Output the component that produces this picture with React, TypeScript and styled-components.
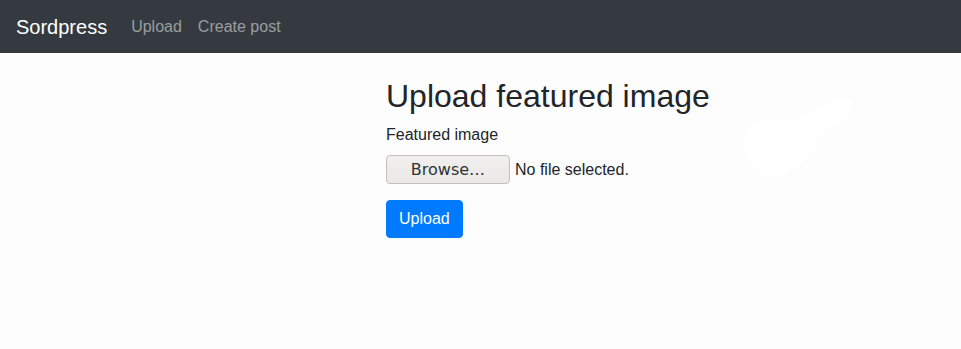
import React from "react";
import styled, { createGlobalStyle } from "styled-components";

const GlobalStyle = createGlobalStyle`
  * { box-sizing: border-box; }
  html, body {
    margin: 0;
    padding: 0;
    background: #fdfdfd;
    color: #212529;
    font-family: "Liberation Sans", Arial, sans-serif;
    font-size: 16px;
    line-height: 1.5;
  }
`;

const Page = styled.div`
  position: relative;
  min-height: 349px;
  overflow: hidden;
`;

const Navbar = styled.nav`
  display: flex;
  align-items: center;
  height: 53px;
  padding: 0 16px;
  background: #343a40;
`;

const Brand = styled.a`
  color: #fff;
  font-size: 20px;
  line-height: 30px;
  margin-right: 16px;
  text-decoration: none;
`;

const NavLink = styled.a`
  color: rgba(255, 255, 255, 0.5);
  padding: 8px;
  line-height: 24px;
  text-decoration: none;
`;

const Main = styled.main`
  padding: 24px 0 0 386px;
`;

const Title = styled.h2`
  margin: 0 0 8px;
  font-size: 32px;
  font-weight: 500;
  line-height: 1.2;
`;

const FormGroup = styled.div`
  margin-bottom: 16px;
`;

const Label = styled.label`
  display: block;
  margin-bottom: 8px;
`;

const FileRow = styled.div`
  display: flex;
  align-items: center;
  gap: 5px;
  height: 29px;
`;

const BrowseButton = styled.button`
  width: 124px;
  height: 29px;
  padding: 0;
  border: 1px solid #c3c1bd;
  border-radius: 4px;
  background: linear-gradient(#f1efed, #ebe9e7);
  color: #2e3436;
  font-family: "DejaVu Sans", sans-serif;
  font-size: 16px;
`;

const FileName = styled.span`
  font-size: 16px;
`;

const PrimaryButton = styled.button`
  padding: 6px 12px;
  border: 1px solid #007bff;
  border-radius: 4px;
  background: #007bff;
  color: #fff;
  font-family: "Liberation Sans", Arial, sans-serif;
  font-size: 16px;
  line-height: 24px;
`;

// faint white smudge on the page background
const Blob = styled.svg`
  position: absolute;
  left: 743px;
  top: 93px;
  pointer-events: none;
`;

export default function App() {
  return (
    <Page>
      <GlobalStyle />
      <Navbar>
        <Brand href="#">Sordpress</Brand>
        <NavLink href="#">Upload</NavLink>
        <NavLink href="#">Create post</NavLink>
      </Navbar>
      <Main>
        <Title>Upload featured image</Title>
        <FormGroup>
          <Label>Featured image</Label>
          <FileRow>
            <BrowseButton type="button">Browse…</BrowseButton>
            <FileName>No file selected.</FileName>
          </FileRow>
        </FormGroup>
        <PrimaryButton type="button">Upload</PrimaryButton>
      </Main>
      <Blob width="114" height="86" viewBox="0 0 114 86">
        <path
          d="M2 54 C0 32 20 22 40 25 C58 28 70 20 86 8 C96 0 112 6 108 18 C104 26 90 32 80 42 C68 56 60 76 36 82 C18 86 4 74 2 54 Z"
          fill="#ffffff"
        />
      </Blob>
    </Page>
  );
}
